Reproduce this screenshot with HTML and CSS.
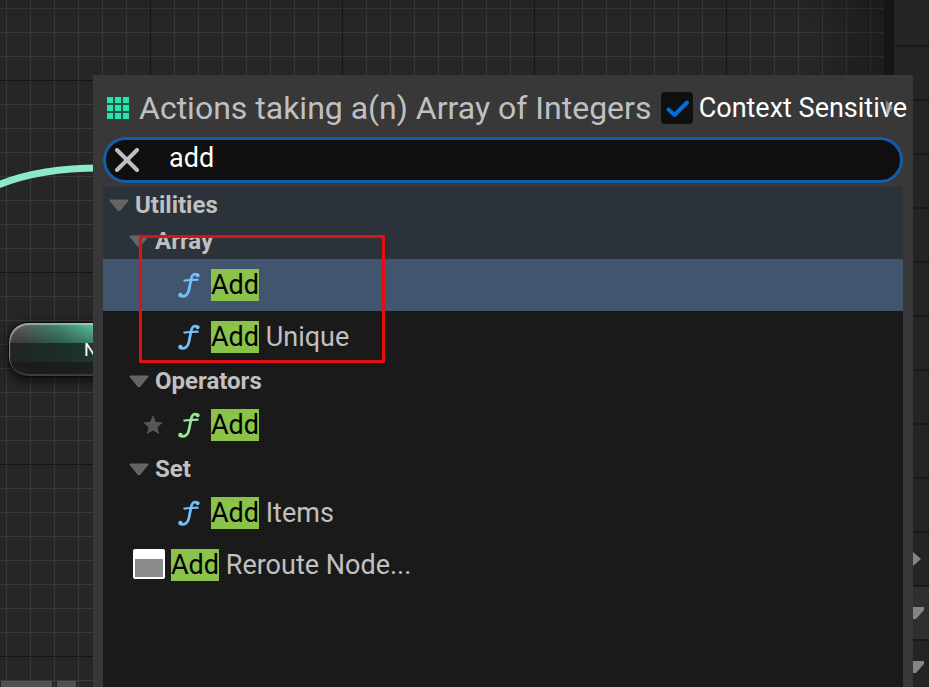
FILE: index.html
```html
<!DOCTYPE html>
<html lang="en">
<head>
<meta charset="utf-8">
<title>Blueprint Actions</title>
<link rel="stylesheet" href="styles.css">
</head>
<body>
<svg class="defs" aria-hidden="true">
  <symbol id="caret" viewBox="0 0 20 13"><path d="M1 .5H19Q20 1 19.300 2L11.500 11.500Q10 13 8.500 11.500L.7 2Q0 1 1 .5Z" fill="currentColor"/></symbol>
  <symbol id="func" viewBox="0 0 22 26">
    <path d="M19.500 3C16.500 1 14.300 2.500 13.400 6L10.800 18.500C10 22.600 6.500 25.400 2.500 24" fill="none" stroke="currentColor" stroke-width="2.700"/>
    <path d="M5.500 8.800C9 7.600 15 8 20.500 7.600" fill="none" stroke="currentColor" stroke-width="2.200"/>
    <circle cx="19.600" cy="3.200" r="2" fill="currentColor"/><circle cx="2.400" cy="23" r="2.200" fill="currentColor"/>
  </symbol>
</svg>
<div class="editor">
  <main class="graph">
    <svg class="wire" viewBox="0 0 100 60" aria-hidden="true"><path d="M-4 46C26 33 60 28 100 28" fill="none" stroke="#8ceac6" stroke-width="7"/></svg>
    <div class="node"><div class="node-title">N</div></div>
    <div class="tab tab-first"></div><div class="tab tab-second"></div>
  </main>
  <aside class="details">
    <div class="detail-row detail-top"></div>
    <div class="detail-row"></div><div class="detail-row"></div><div class="detail-row"></div>
    <div class="detail-row"></div><div class="detail-row"></div><div class="detail-row"></div>
    <div class="detail-row"></div><div class="detail-row"></div><div class="detail-row"></div>
    <div class="detail-row"><svg class="expander" viewBox="0 0 16 20"><path d="M5 3L13 10L5 17Z" fill="#858585"/></svg></div>
    <div class="detail-row detail-light"><svg class="expander" viewBox="0 0 16 20"><path d="M0 4H16Q17 5 16 7L8 16H0Z" fill="#858585"/></svg></div>
    <div class="detail-row"><svg class="expander" viewBox="0 0 16 20"><path d="M0 4H16Q17 5 16 7L8 16H0Z" fill="#858585"/></svg></div>
  </aside>
</div>

<section class="menu">
  <header class="menu-header">
    <svg class="array-icon" viewBox="0 0 22 22" aria-hidden="true">
      <path d="M0 0H22V22H0Z" fill="#187860"/>
      <path d="M6 0H8V22H6ZM14 0H16V22H14ZM0 6H22V8H0ZM0 14H22V16H0Z" fill="#265347"/>
      <path d="M0 0H6V6H0ZM8 0H14V6H8ZM16 0H22V6H16ZM0 8H6V14H0ZM8 8H14V14H8ZM16 8H22V14H16ZM0 16H6V22H0ZM8 16H14V22H8ZM16 16H22V22H16Z" fill="#24e5ad"/>
    </svg>
    <h1 class="menu-title">Actions taking a(n) Array of Integers</h1>
    <label class="context">
      <span class="check"><input type="checkbox" class="check-box" checked>
        <svg class="check-mark" viewBox="0 0 32 32" aria-hidden="true"><path d="M7.500 17.500L13.500 23L26 10.500" fill="none" stroke="#0070e0" stroke-width="4" stroke-linecap="round" stroke-linejoin="round"/></svg></span>
      <span>Context Sensitive</span>
    </label>
    <svg class="more" viewBox="0 0 8 16" aria-hidden="true"><path d="M1 0L8 8L1 16Z" fill="#a0a0a0"/></svg>
  </header>
  <div class="search">
    <button class="clear" type="button" aria-label="Clear search"><svg viewBox="0 0 24 24"><path d="M2 2L22 22M22 2L2 22" stroke="#c0c0c0" stroke-width="4" stroke-linecap="round"/></svg></button>
    <input class="search-input" type="text" value="add" aria-label="Search actions">
  </div>
  <div class="results">
    <div class="group group-root"><svg class="caret"><use href="#caret"/></svg>Utilities</div>
    <div class="group group-active"><svg class="caret"><use href="#caret"/></svg>Array</div>
    <div class="item item-selected"><svg class="func"><use href="#func"/></svg><span><mark>Add</mark></span></div>
    <div class="item"><svg class="func"><use href="#func"/></svg><span><mark>Add</mark> Unique</span></div>
    <div class="group"><svg class="caret"><use href="#caret"/></svg>Operators</div>
    <div class="item item-starred"><svg class="star" viewBox="0 0 20 20"><path d="M10 0L12.800 6.800L20 7.400L14.500 12.100L16.200 19.200L10 15.400L3.800 19.200L5.500 12.100L0 7.400L7.200 6.800Z" fill="#565656"/></svg><svg class="func func-pure"><use href="#func"/></svg><span><mark>Add</mark></span></div>
    <div class="group"><svg class="caret"><use href="#caret"/></svg>Set</div>
    <div class="item"><svg class="func"><use href="#func"/></svg><span><mark>Add</mark> Items</span></div>
    <div class="item item-root"><svg class="window" viewBox="0 0 32 32"><rect y="0" width="32" height="30" rx="2" fill="#fff"/><path d="M2 10H30V28H2Z" fill="#8b8b8b"/></svg><span><mark>Add</mark> Reroute Node...</span></div>
  </div>
  <div class="annotation"></div>
</section>
</body>
</html>
```
FILE: styles.css
```css
* { box-sizing: border-box; }

body {
  margin: 0;
  background: #262626;
  color: #c0c0c0;
  font-family: Roboto, "Liberation Sans", sans-serif;
  overflow: hidden;
}

svg { display: block; flex: none; }
.defs { position: absolute; width: 0; height: 0; }

.editor { display: flex; height: 100vh; }

.graph {
  position: relative;
  flex: 1;
  overflow: hidden;
  background:
    linear-gradient(to left, rgba(0, 0, 0, .25), transparent 80px),
    linear-gradient(to bottom, rgba(0, 0, 0, .08), transparent 30px),
    linear-gradient(to right, #161616 1px, transparent 1px) 150px 0 / 192px 192px,
    linear-gradient(to bottom, #161616 1px, transparent 1px) 0 80px / 192px 192px,
    linear-gradient(to right, #383838 1px, transparent 1px) 6px 0 / 24px 24px,
    linear-gradient(to bottom, #383838 1px, transparent 1px) 0 8px / 24px 24px,
    #262626;
}

.wire { position: absolute; left: 0; top: 140px; width: 100px; height: 60px; }

.node {
  position: absolute;
  left: 8px;
  top: 322px;
  width: 180px;
  height: 55px;
  border: 1px solid #0a0a0a;
  border-radius: 20px;
  box-shadow: 0 3px 8px 2px rgba(0, 0, 0, .55), inset 1px 2px 1px rgba(200, 225, 215, .55), inset 0 -2px 1px rgba(110, 110, 110, .4);
  background:
    linear-gradient(to bottom, transparent 20px, rgba(22, 30, 27, .75) 20px, rgba(22, 30, 27, .75) 39px, rgba(26, 26, 24, .95) 39px),
    linear-gradient(to bottom, transparent, rgba(0, 0, 0, .35) 20px),
    linear-gradient(to right, #5c5c5c 10px, #458a75 50px, #5cc4a4 85px);
}

.node-title { padding: 17px 0 0 75px; color: #fff; font-size: 18px; line-height: 20px; }

.tab { position: absolute; bottom: 0; height: 6px; background: #515151; }
.tab-first { left: 1px; width: 51px; }
.tab-second { left: 57px; width: 19px; }

.details {
  width: 45px;
  overflow: hidden;
  border-left: 10px solid #151515;
  background: #242424;
}

.detail-row {
  display: flex;
  align-items: center;
  height: 54px;
  padding-left: 14px;
  border-bottom: 2px solid #191919;
}
.detail-top { height: 47px; }
.detail-light { background: #2f2f2f; }
.expander { width: 16px; height: 20px; }

.menu {
  position: absolute;
  left: 93px;
  right: 16px;
  top: 75px;
  bottom: 0;
  display: flex;
  flex-direction: column;
  padding: 0 10px;
  background: #383838;
}

.menu-header {
  position: relative;
  display: flex;
  align-items: center;
  height: 62px;
  padding: 4px 0 0 4px;
  white-space: nowrap;
}
.array-icon { width: 22px; height: 22px; margin-right: 10px; }
.menu-title { flex: 1; min-width: 0; margin: 0; font-size: 32px; font-weight: 400; line-height: 40px; }

.context {
  display: flex;
  align-items: center;
  gap: 6px;
  margin-right: -4px;
  color: #fff;
  font-size: 27px;
  line-height: 32px;
}
.check { position: relative; width: 32px; height: 32px; }
.check-box {
  appearance: none;
  display: block;
  width: 32px;
  height: 32px;
  margin: 0;
  border-radius: 4px;
  background: #0f0f0f;
}
.check-mark { position: absolute; inset: 0; pointer-events: none; }
.more { position: absolute; right: 10px; top: 25px; width: 8px; height: 16px; opacity: .7; }

.search {
  display: flex;
  align-items: center;
  height: 46px;
  border: 3px solid #155cad;
  border-radius: 23px;
  background: #0f0f0f;
}
.clear { width: 24px; height: 24px; margin-left: 9px; padding: 0; border: 0; background: none; }
.search-input {
  flex: 1;
  min-width: 0;
  height: 40px;
  padding: 0 0 4px 30px;
  border: 0;
  outline: 0;
  background: none;
  color: #fff;
  font: 27px/32px Roboto, "Liberation Sans", sans-serif;
}

.results { flex: 1; margin-top: 4px; background: #1a1a1a; }

.group {
  display: flex;
  align-items: center;
  gap: 6px;
  height: 36px;
  padding-left: 26px;
  font-size: 24px;
  font-weight: 700;
}
.group-root { padding-left: 6px; background: #2b323a; }
.group-active { background: #2b323a; }
.caret { width: 20px; height: 13px; color: #656565; }

.item {
  display: flex;
  align-items: center;
  height: 52px;
  padding-left: 75px;
  font-size: 27px;
  line-height: 32px;
}
.item-selected { background: #41566e; }
.item-starred { padding-left: 40px; }
.item-root { padding-left: 30px; }
.func { width: 22px; height: 26px; margin-right: 11px; color: #74c2f5; }
.func-pure { color: #9be89b; }
.star { width: 20px; height: 20px; margin-right: 15px; }
.window { width: 32px; height: 32px; margin-right: 6px; }

mark { display: inline-block; background: #8bc24a; color: #000; }

.annotation {
  position: absolute;
  left: 46px;
  top: 160px;
  width: 246px;
  height: 128px;
  border: 3px solid #e31010;
  pointer-events: none;
}
```
